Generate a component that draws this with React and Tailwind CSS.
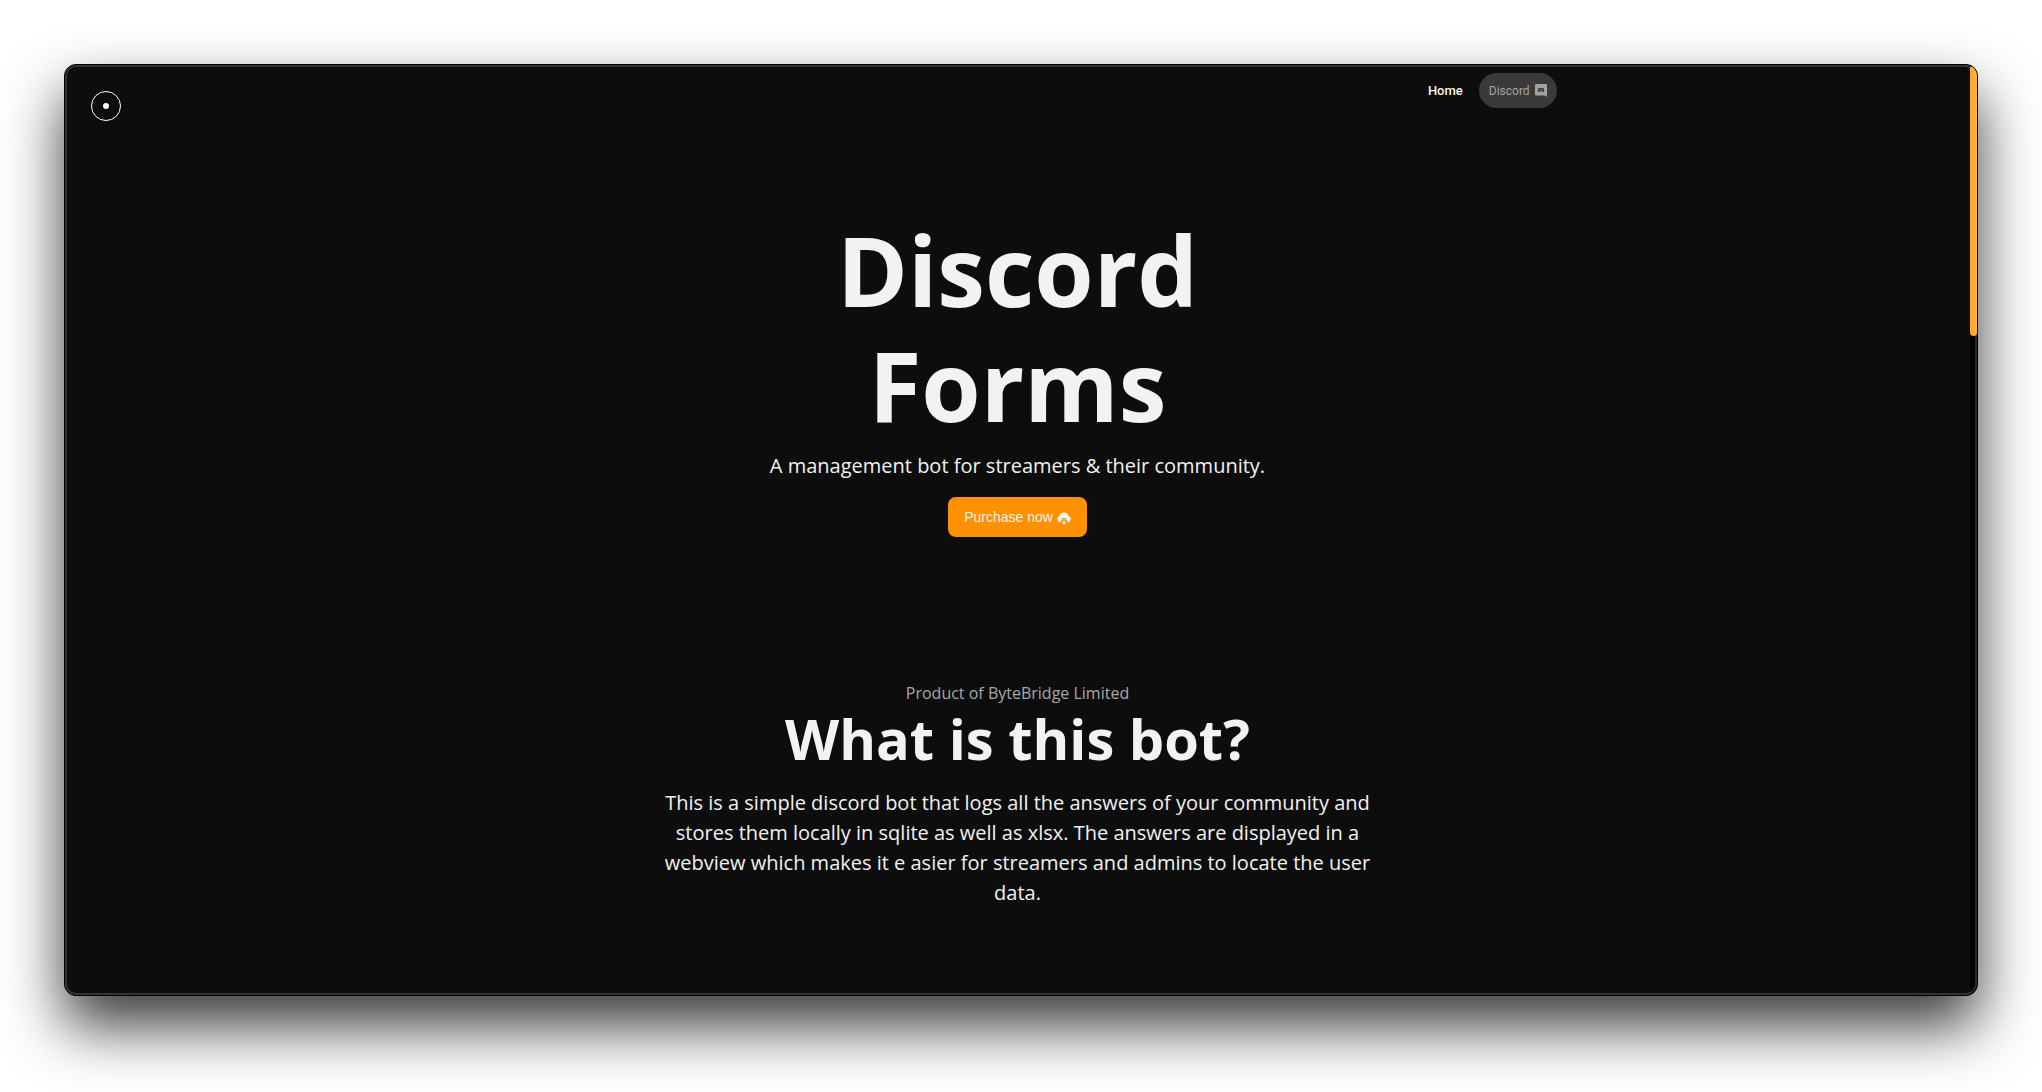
import React from 'react';

const DiscordIcon = ({ className }) => (
  <svg viewBox="0 0 24 26" fill="currentColor" aria-hidden="true" className={className}>
    <path
      fillRule="evenodd"
      d="M2.500 0h19A2.500 2.500 0 0 1 24 2.500V26l-4-3H2.500A2.500 2.500 0 0 1 0 20.500v-18A2.500 2.500 0 0 1 2.500 0ZM9.200 7.500C7.800 7.700 6.800 8.500 6.800 8.500c-.9 1.900-1.300 3.900-1.200 5.900 0 0 1.100 1.600 3.300 1.600l.8-1.100c1.500.4 3.100.4 4.600 0l.8 1.100c2.200 0 3.300-1.600 3.300-1.600.1-2-.3-4-1.200-5.900 0 0-1-.8-2.400-1l-.4.8c-1.600-.3-3.200-.3-4.800 0l-.4-.8ZM10 10.700a1.100 1.200 0 1 1 0 2.400 1.100 1.200 0 0 1 0-2.400Zm4 0a1.100 1.200 0 1 1 0 2.400 1.100 1.200 0 0 1 0-2.400Z"
    />
  </svg>
);

const CloudDownloadIcon = ({ className }) => (
  <svg viewBox="0 0 28 26" fill="currentColor" aria-hidden="true" className={className}>
    <path d="M8 20.500H6.500a6.500 6.500 0 0 1-1-12.800A8.800 8.800 0 0 1 22.500 7.700a6.500 6.500 0 0 1-1 12.800H20A6 6 0 0 0 18.500 15 4.600 4.600 0 0 0 9.500 15 6 6 0 0 0 8 20.500Z" />
    <path d="M12.800 14h2.400v6.500H18L14 26l-4-5.500h2.800Z" />
  </svg>
);

const Navbar = () => (
  <header className="flex items-start justify-between pl-[26px] pt-2">
    <a
      href="#top"
      aria-label="Discord Forms"
      className="mt-[18px] flex size-[30px] items-center justify-center rounded-full border border-white"
    >
      <span className="size-[6px] rounded-full bg-white" />
    </a>
    <nav className="mr-[22%] flex items-center gap-4 font-['Roboto',sans-serif] text-[13px]">
      <a href="#home" className="font-medium text-[#fff3e0]">
        Home
      </a>
      <a
        href="#discord"
        className="flex h-[35px] items-center gap-[5px] rounded-full bg-[#3a3a3a] px-[10px] text-xs text-[#a3a3a3]"
      >
        Discord
        <DiscordIcon className="h-[13px] w-3" />
      </a>
    </nav>
  </header>
);

const Hero = () => (
  <section className="mx-auto mt-[91px] flex max-w-[720px] flex-col items-center text-center">
    <h1 className="max-w-[500px] text-8xl font-bold leading-[115px]">Discord Forms</h1>
    <p className="mt-[9px] text-xl leading-[30px]">A management bot for streamers &amp; their community.</p>
    <button
      type="button"
      className="mt-4 flex h-10 items-center gap-1 rounded-lg bg-[#ff9100] px-4 font-['Liberation_Sans',sans-serif] text-sm"
    >
      Purchase now
      <CloudDownloadIcon className="mt-[2px] h-[13px] w-[14px]" />
    </button>
  </section>
);

const About = () => (
  <section className="mx-auto mt-[144px] flex max-w-[720px] flex-col items-center text-center">
    <p className="text-base text-[#a8a8a8]">Product of ByteBridge Limited</p>
    <h2 className="text-[56px] font-bold leading-[67px]">What is this bot?</h2>
    <p className="mt-4 text-xl leading-[30px]">
      This is a simple discord bot that logs all the answers of your community and stores them locally in sqlite as well
      as xlsx. The answers are displayed in a webview which makes it e asier for streamers and admins to locate the user
      data.
    </p>
  </section>
);

const App = () => {
  return (
    <div className="flex min-h-screen overflow-hidden bg-white px-16 pb-24 pt-16">
      <div className="relative flex flex-1 overflow-hidden rounded-xl border border-black bg-[#0d0d0d] font-['Open_Sans',sans-serif] text-[#f2f2f2] shadow-[0_30px_60px_rgba(0,0,0,0.78)]">
        <main className="flex-1">
          <Navbar />
          <Hero />
          <About />
        </main>
        <div className="w-[7px] bg-black pt-[2px]">
          <div className="h-[29%] rounded-b-full bg-[#ffa826]" />
        </div>
        <div className="pointer-events-none absolute inset-0 rounded-[11px] border-2 border-white/16" />
      </div>
    </div>
  );
};

export default App;
